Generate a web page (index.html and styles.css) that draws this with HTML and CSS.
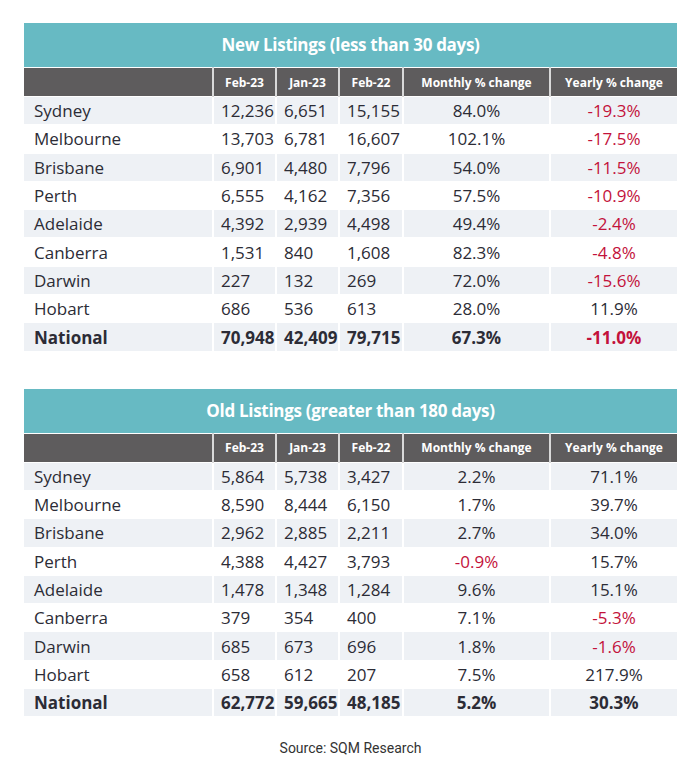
FILE: index.html
```html
<!DOCTYPE html>
<html>
<head>
<meta charset="utf-8">
<link rel="stylesheet" href="styles.css">
</head>
<body>
<div class="page">
  <section class="block">
    <div class="title">New Listings (less than 30 days)</div>
    <table class="data">
      <colgroup><col class="c-city"><col class="c-n"><col class="c-n"><col class="c-n3"><col class="c-m"><col class="c-y"></colgroup>
      <thead>
        <tr><th></th><th>Feb-23</th><th>Jan-23</th><th>Feb-22</th><th>Monthly % change</th><th>Yearly % change</th></tr>
      </thead>
      <tbody>
        <tr class="alt"><td class="city">Sydney</td><td>12,236</td><td>6,651</td><td>15,155</td><td class="pct">84.0%</td><td class="pct neg">-19.3%</td></tr>
        <tr><td class="city">Melbourne</td><td>13,703</td><td>6,781</td><td>16,607</td><td class="pct">102.1%</td><td class="pct neg">-17.5%</td></tr>
        <tr class="alt"><td class="city">Brisbane</td><td>6,901</td><td>4,480</td><td>7,796</td><td class="pct">54.0%</td><td class="pct neg">-11.5%</td></tr>
        <tr><td class="city">Perth</td><td>6,555</td><td>4,162</td><td>7,356</td><td class="pct">57.5%</td><td class="pct neg">-10.9%</td></tr>
        <tr class="alt"><td class="city">Adelaide</td><td>4,392</td><td>2,939</td><td>4,498</td><td class="pct">49.4%</td><td class="pct neg">-2.4%</td></tr>
        <tr><td class="city">Canberra</td><td>1,531</td><td>840</td><td>1,608</td><td class="pct">82.3%</td><td class="pct neg">-4.8%</td></tr>
        <tr class="alt"><td class="city">Darwin</td><td>227</td><td>132</td><td>269</td><td class="pct">72.0%</td><td class="pct neg">-15.6%</td></tr>
        <tr><td class="city">Hobart</td><td>686</td><td>536</td><td>613</td><td class="pct">28.0%</td><td class="pct">11.9%</td></tr>
        <tr class="alt total"><td class="city">National</td><td>70,948</td><td>42,409</td><td>79,715</td><td class="pct">67.3%</td><td class="pct neg">-11.0%</td></tr>
      </tbody>
    </table>
  </section>

  <section class="block">
    <div class="title">Old Listings (greater than 180 days)</div>
    <table class="data">
      <colgroup><col class="c-city"><col class="c-n"><col class="c-n"><col class="c-n3"><col class="c-m"><col class="c-y"></colgroup>
      <thead>
        <tr><th></th><th>Feb-23</th><th>Jan-23</th><th>Feb-22</th><th>Monthly % change</th><th>Yearly % change</th></tr>
      </thead>
      <tbody>
        <tr class="alt"><td class="city">Sydney</td><td>5,864</td><td>5,738</td><td>3,427</td><td class="pct">2.2%</td><td class="pct">71.1%</td></tr>
        <tr><td class="city">Melbourne</td><td>8,590</td><td>8,444</td><td>6,150</td><td class="pct">1.7%</td><td class="pct">39.7%</td></tr>
        <tr class="alt"><td class="city">Brisbane</td><td>2,962</td><td>2,885</td><td>2,211</td><td class="pct">2.7%</td><td class="pct">34.0%</td></tr>
        <tr><td class="city">Perth</td><td>4,388</td><td>4,427</td><td>3,793</td><td class="pct neg">-0.9%</td><td class="pct">15.7%</td></tr>
        <tr class="alt"><td class="city">Adelaide</td><td>1,478</td><td>1,348</td><td>1,284</td><td class="pct">9.6%</td><td class="pct">15.1%</td></tr>
        <tr><td class="city">Canberra</td><td>379</td><td>354</td><td>400</td><td class="pct">7.1%</td><td class="pct neg">-5.3%</td></tr>
        <tr class="alt"><td class="city">Darwin</td><td>685</td><td>673</td><td>696</td><td class="pct">1.8%</td><td class="pct neg">-1.6%</td></tr>
        <tr><td class="city">Hobart</td><td>658</td><td>612</td><td>207</td><td class="pct">7.5%</td><td class="pct">217.9%</td></tr>
        <tr class="alt total"><td class="city">National</td><td>62,772</td><td>59,665</td><td>48,185</td><td class="pct">5.2%</td><td class="pct">30.3%</td></tr>
      </tbody>
    </table>
  </section>

  <p class="source">Source: SQM Research</p>
</div>
</body>
</html>
```

FILE: styles.css
```css
html, body {
  margin: 0;
  padding: 0;
  background: #ffffff;
}

.page {
  width: 653px;
  padding: 23px 0 0 24px;
  display: flex;
  flex-direction: column;
  gap: 38px;
}

.block {
  display: flex;
  flex-direction: column;
}

.title {
  height: 44px;
  line-height: 44px;
  background: #67bac3;
  color: #ffffff;
  text-align: center;
  font-family: "Open Sans", sans-serif;
  font-weight: 700;
  font-size: 17px;
  letter-spacing: -0.3px;
}

.data {
  width: 653px;
  border-collapse: collapse;
  table-layout: fixed;
  font-family: "Open Sans", sans-serif;
  color: #2c2c36;
}

.c-city { width: 189px; }
.c-n { width: 63px; }
.c-n3 { width: 64px; }
.c-m { width: 147px; }
.c-y { width: 127px; }

.data th {
  height: 28px;
  padding: 0;
  background: #5e5c5d;
  color: #ffffff;
  font-size: 12px;
  font-weight: 700;
  text-align: center;
  border-top: 1px solid #ffffff;
  border-left: 2px solid #d9d9d9;
}

.data th:first-child,
.data td:first-child {
  border-left: none;
}

.data td {
  height: 27.3px;
  padding: 0 0 0 7px;
  font-size: 17px;
  font-stretch: 94%;
  white-space: nowrap;
  border-top: 1px solid #ffffff;
  border-left: 2px solid #ffffff;
}

.data td.city {
  padding-left: 10px;
}

.data td.pct {
  text-align: center;
  padding: 0;
}

.data tr.alt td {
  background: #eef1f5;
}

.data td.neg {
  color: #c3123b;
}

.data tr.total td {
  font-weight: 700;
}

.source {
  margin: -14px 0 0 0;
  text-align: center;
  font-family: Roboto, sans-serif;
  font-size: 14px;
  color: #333333;
}
```
